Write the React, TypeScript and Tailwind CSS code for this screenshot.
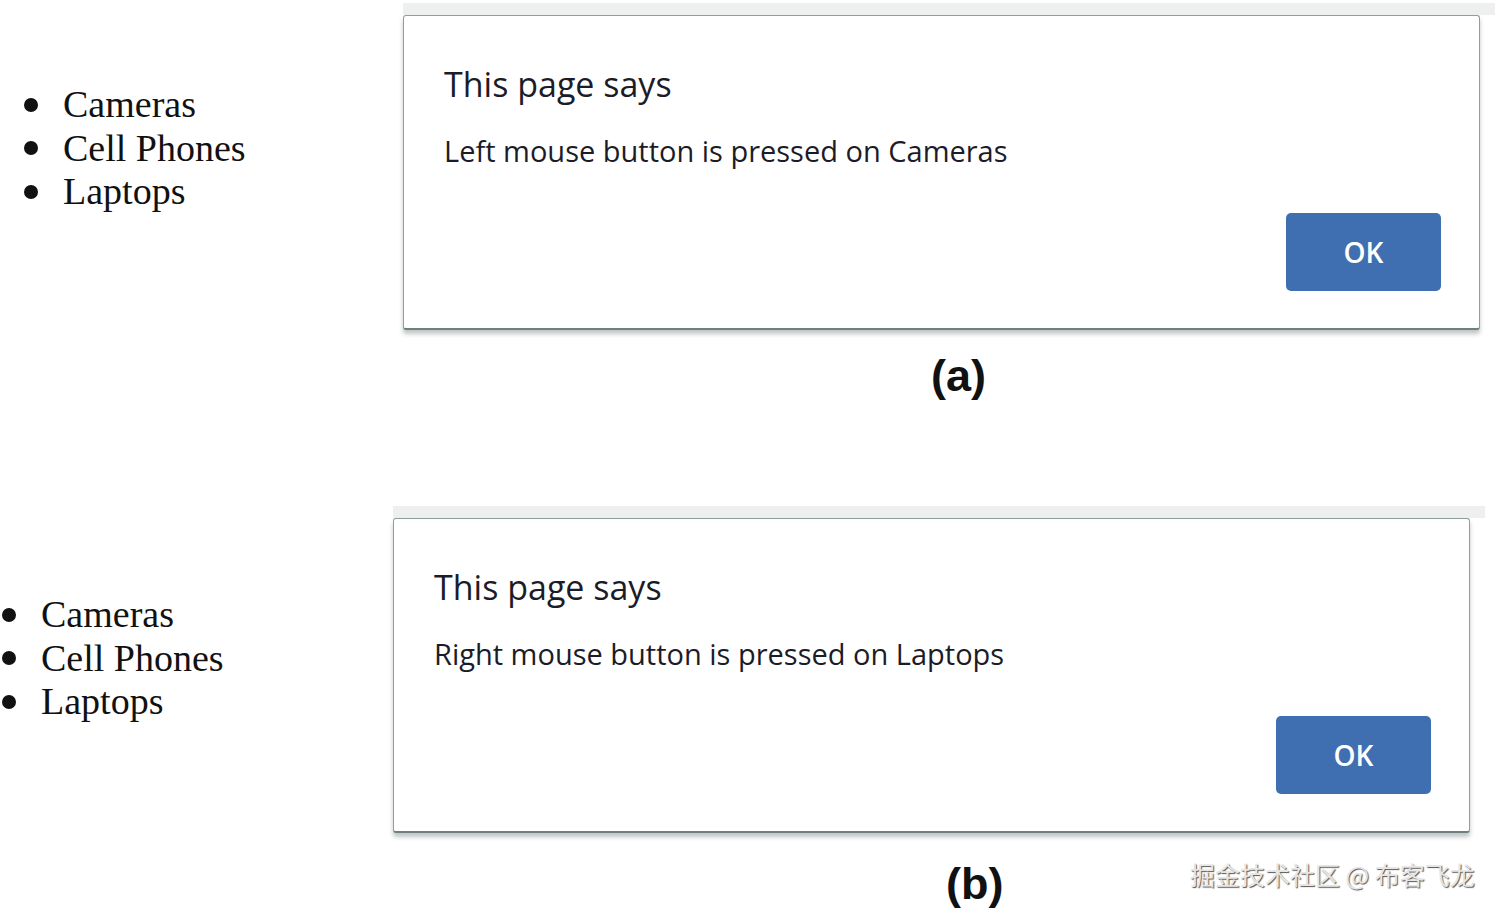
import React from "react";

const items = ["Cameras", "Cell Phones", "Laptops"];

function List({ pad }: { pad: string }) {
  return (
    <ul className={`${pad} flex flex-col font-['Liberation_Serif','Times_New_Roman',serif] text-[38px] leading-[43.5px] text-[#111]`}>
      {items.map((t) => (
        <li key={t} className="flex items-center">
          <span className="w-[14px] h-[14px] rounded-full bg-[#111] mr-[25px]" />
          <span>{t}</span>
        </li>
      ))}
    </ul>
  );
}

function Dialog({ msg }: { msg: string }) {
  return (
    <div className="flex flex-col">
      <div className="h-[12px] w-[1092px] bg-[#eef0f0]" />
      <div className="w-[1077px] h-[315px] bg-white border border-[#8f9f9f] border-b-[2px] border-b-[#6e7f7f] rounded-[3px] shadow-[0_4px_4px_rgba(80,90,90,0.35)] flex flex-col pl-[40px] pr-[38px] font-['Open_Sans','Noto_Sans',sans-serif] text-[#1c1c28]">
        <div className="mt-[46px] text-[34px] leading-[44px]">This page says</div>
        <div className="mt-[26px] text-[29px] leading-[38px]">{msg}</div>
        <div className="flex justify-end mt-[43px]">
          <div className="w-[155px] h-[78px] rounded-[5px] bg-[#3f6fb0] flex items-center justify-center text-white text-[28px] font-semibold">
            OK
          </div>
        </div>
      </div>
    </div>
  );
}

export default function App() {
  return (
    <div className="w-[1500px] h-[913px] bg-white overflow-hidden relative">
      <div className="flex pt-[3px] h-[506px]">
        <div className="w-[403px] pt-[80px]">
          <List pad="pl-[24px]" />
        </div>
        <div className="flex flex-col">
          <Dialog msg="Left mouse button is pressed on Cameras" />
          <div className="ml-[528px] mt-[20px] font-['Liberation_Sans',Arial,sans-serif] font-bold text-[45px] leading-[52px] text-[#111]">
            (a)
          </div>
        </div>
      </div>
      <div className="flex">
        <div className="w-[393px] pt-[87px]">
          <List pad="pl-[2px]" />
        </div>
        <div className="flex flex-col">
          <Dialog msg="Right mouse button is pressed on Laptops" />
          <div className="ml-[553px] mt-[25px] font-['Liberation_Sans',Arial,sans-serif] font-bold text-[45px] leading-[52px] text-[#111]">
            (b)
          </div>
        </div>
      </div>
      <div className="absolute left-[1190px] top-[857px] font-['Noto_Sans_CJK_SC',sans-serif] text-[25px] leading-[34px] text-[#e6e6e6] [text-shadow:1px_1px_1px_#555]">
        掘金技术社区 @ 布客飞龙
      </div>
    </div>
  );
}
